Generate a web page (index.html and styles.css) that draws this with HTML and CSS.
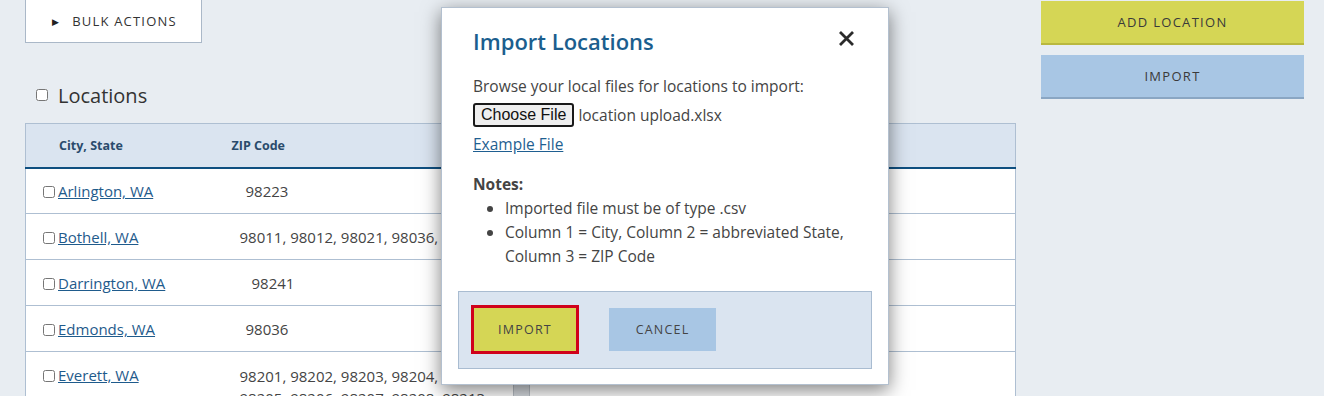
FILE: index.html
```html
<!DOCTYPE html>
<html lang="en">
<head>
<meta charset="utf-8">
<title>Locations</title>
<link rel="stylesheet" href="styles.css">
</head>
<body>
<div class="page">
  <main class="main">
    <button class="bulk"><span class="tri">&#9654;</span>BULK ACTIONS</button>
    <h2 class="heading"><input type="checkbox" class="hcheck"><span>Locations</span></h2>
    <table class="table">
      <thead>
        <tr><th class="c1">City, State</th><th class="c2">ZIP Code</th><th class="c3"></th></tr>
      </thead>
      <tbody>
        <tr><td class="c1"><input type="checkbox"><a href="#">Arlington, WA</a></td><td class="c2"><span class="ind1">98223</span></td><td class="c3"></td></tr>
        <tr><td class="c1"><input type="checkbox"><a href="#">Bothell, WA</a></td><td class="c2">98011, 98012, 98021, 98036, 98041</td><td class="c3"></td></tr>
        <tr><td class="c1"><input type="checkbox"><a href="#">Darrington, WA</a></td><td class="c2"><span class="ind2">98241</span></td><td class="c3"></td></tr>
        <tr><td class="c1"><input type="checkbox"><a href="#">Edmonds, WA</a></td><td class="c2"><span class="ind1">98036</span></td><td class="c3"></td></tr>
        <tr class="tall"><td class="c1"><input type="checkbox"><a href="#">Everett, WA</a></td><td class="c2"><div class="scrollcell"><div class="zips">98201, 98202, 98203, 98204, 98204, 98205, 98206, 98207, 98208, 98213</div><div class="sbar"></div></div></td><td class="c3"></td></tr>
      </tbody>
    </table>
  </main>
  <aside class="side">
    <button class="btn btn-yellow">ADD LOCATION</button>
    <button class="btn btn-blue">IMPORT</button>
  </aside>
</div>

<div class="modal">
  <div class="mhead">
    <h3 class="mtitle">Import Locations</h3>
    <span class="close" aria-label="Close"><svg width="17" height="17" viewBox="0 0 17 17"><path d="M2 2 L15 15 M15 2 L2 15" stroke="#2b2b2b" stroke-width="2.8" stroke-linecap="butt"/></svg></span>
  </div>
  <p class="mtext">Browse your local files for locations to import:</p>
  <div class="filerow"><span class="choose">Choose File</span><span class="fname">location upload.xlsx</span></div>
  <p class="mtext"><a class="example" href="#">Example File</a></p>
  <p class="notes">Notes:</p>
  <ul class="nlist">
    <li>Imported file must be of type .csv</li>
    <li>Column 1 = City, Column 2 = abbreviated State, Column 3 = ZIP Code</li>
  </ul>
  <div class="mfoot">
    <button class="btn2 btn-yellow focus">IMPORT</button>
    <button class="btn2 btn-blue">CANCEL</button>
  </div>
</div>
</body>
</html>
```
FILE: styles.css
```css
html, body {
  margin: 0;
  padding: 0;
}
body {
  background: #e8edf2;
  font-family: "Open Sans", "Lato", sans-serif;
  color: #444;
  width: 1324px;
  height: 396px;
  overflow: hidden;
  position: relative;
}
*, *::before, *::after { box-sizing: border-box; }
.page {
  display: flex;
  gap: 25px;
  padding-left: 25px;
}
.main {
  width: 991px;
  display: flex;
  flex-direction: column;
}
.bulk {
  width: 177px;
  height: 44px;
  margin-top: -1px;
  background: #fff;
  border: 1px solid #aab8c8;
  font-family: inherit;
  font-size: 13px;
  letter-spacing: 1.2px;
  color: #333;
  display: flex;
  align-items: center;
  padding: 0 0 0 26px;
  cursor: pointer;
}
.tri {
  font-size: 9px;
  margin-right: 12px;
  color: #222;
}
.heading {
  margin: 32px 0 0 0;
  height: 40px;
  display: flex;
  align-items: center;
  font-weight: 400;
  font-size: 20px;
  color: #333;
}
.hcheck {
  margin: 0 10px 0 11px;
  width: 12px;
  height: 12px;
}
.table {
  border-collapse: collapse;
  width: 991px;
  background: #fff;
  border: 1px solid #aebfd2;
  margin-top: 8px;
}
.table th {
  background: #dae4f0;
  height: 44px;
  text-align: left;
  font-size: 12.5px;
  font-weight: 700;
  color: #2a4b6c;
  border-bottom: 2px solid #0e4f80;
  padding: 0;
}
.table th.c1 { padding-left: 33px; width: 206px; }
.table th.c2 { width: 298px; }
.table td {
  height: 46px;
  border-bottom: 1px solid #aebfd2;
  font-size: 15px;
  color: #444;
  padding: 0;
  vertical-align: middle;
}
.table td.c1 { padding-left: 17px; }
.table td.c1 input {
  margin: 0 3px 0 0;
  width: 12px;
  height: 12px;
  vertical-align: -1px;
}
.table td.c2 { padding-left: 8px; }
.table a { color: #1f5b8c; }
.ind1 { padding-left: 6px; }
.ind2 { padding-left: 12px; }
.tall td { vertical-align: top; height: auto; }
.tall td.c1 { padding-top: 13px; }
.scrollcell {
  display: flex;
  padding-top: 13px;
}
.zips {
  width: 273px;
  line-height: 22px;
}
.sbar {
  width: 17px;
  margin-top: 20px;
  height: 40px;
  background: #d6dadf;
  border-left: 1px solid #b8bec5;
  border-right: 1px solid #b8bec5;
}
.side {
  width: 263px;
  display: flex;
  flex-direction: column;
  gap: 10px;
  padding-top: 1px;
}
.btn {
  height: 44px;
  border: 0;
  font-family: inherit;
  font-size: 13px;
  letter-spacing: 1.3px;
  color: #3a3a3a;
  cursor: pointer;
}
.btn-yellow {
  background: #d5d655;
  border-bottom: 2px solid #b9b83f;
}
.btn-blue {
  background: #a8c6e4;
  border-bottom: 2px solid #8aa6c3;
}
.modal {
  position: absolute;
  left: 441px;
  top: 7px;
  width: 448px;
  height: 378px;
  padding: 15px 16px 16px 31px;
  background: #fff;
  border: 1px solid #b3c0cf;
  box-shadow: 0 5px 18px rgba(0, 0, 0, 0.5);
}
.mhead {
  display: flex;
  justify-content: space-between;
  align-items: center;
  height: 36px;
  padding-right: 17px;
}
.mtitle {
  margin: 0;
  font-size: 22px;
  font-weight: 600;
  color: #1b5e8e;
}
.close {
  display: flex;
  width: 17px;
  height: 17px;
  margin-top: -5px;
}
.mtext {
  margin: 0;
  font-size: 15.5px;
  line-height: 24px;
  color: #444;
}
.mhead + .mtext { margin-top: 15px; }
.filerow {
  display: flex;
  align-items: center;
  height: 24px;
  margin: 5px 0 5px 0;
  font-size: 15.5px;
}
.choose {
  font-family: "Liberation Sans", Arial, sans-serif;
  font-size: 16px;
  color: #111;
  background: #efefef;
  border: 2px solid #1a1a1a;
  border-radius: 3px;
  height: 24px;
  line-height: 20px;
  padding: 0 6px;
  margin-right: 4px;
}
.fname { color: #444; }
.example { color: #1f5f91; }
.notes {
  margin: 16px 0 0 0;
  font-size: 15.5px;
  line-height: 24px;
  font-weight: 700;
  color: #444;
}
.nlist {
  margin: 0;
  padding-left: 32px;
  font-size: 15.5px;
  line-height: 24px;
  color: #444;
}
.mfoot {
  margin: 23px 0 0 -15px;
  background: #dae4f0;
  border: 1px solid #a9bcd1;
  padding: 16px 15px 17px;
  display: flex;
  gap: 33px;
}
.btn2 {
  height: 43px;
  border: 0;
  font-family: inherit;
  font-size: 12.5px;
  letter-spacing: 1.2px;
  color: #444;
  cursor: pointer;
}
.btn2.btn-yellow { width: 102px; }
.btn2.btn-blue { width: 107px; }
.focus {
  outline: 3px solid #d0021b;
}
```
